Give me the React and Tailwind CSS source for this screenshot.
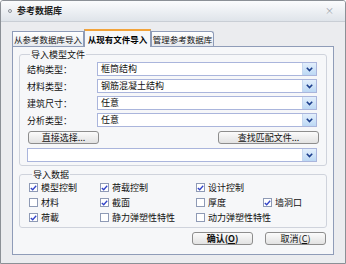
import React from 'react';

const FONT = { fontFamily: '"Noto Sans CJK SC", "Noto Sans", sans-serif' };

function Chevron() {
  return (
    <svg width="7" height="5" viewBox="0 0 7 5">
      <path d="M0.8 0.8 L3.5 3.6 L6.2 0.8" fill="none" stroke="#1d3f8c" strokeWidth="1.6" />
    </svg>
  );
}

function Combo({ value, className = '' }) {
  return (
    <div className={`flex h-[14px] items-stretch border border-[#aab5dc] bg-white ${className}`}>
      <div className="flex-1 pl-[3px] text-[9px] leading-[12px] text-[#111]">{value}</div>
      <div className="flex w-[14px] items-center justify-center border-l border-[#c6d7ef] bg-gradient-to-b from-[#e3effc] to-[#bcd8f4]">
        <Chevron />
      </div>
    </div>
  );
}

function Btn({ children, className = '', bold }) {
  return (
    <button className={`flex h-[13px] items-center justify-center whitespace-nowrap rounded-[3px] border border-[#8d8d8d] bg-gradient-to-b from-[#fbfbfb] to-[#e2e2e2] text-[9px] leading-none text-[#111] ${bold ? 'font-bold' : ''} ${className}`}>
      {children}
    </button>
  );
}

function Check({ on, label }) {
  return (
    <div className="flex items-center gap-[3px] whitespace-nowrap">
      <div className="flex h-[9px] w-[9px] items-center justify-center border border-[#8e9ab5] bg-white">
        {on && (
          <svg width="7" height="6" viewBox="0 0 7 6">
            <path d="M0.8 3 L2.7 4.8 L6.2 0.8" fill="none" stroke="#3344c8" strokeWidth="1.3" />
          </svg>
        )}
      </div>
      <span className="text-[9px] leading-none text-[#111]">{label}</span>
    </div>
  );
}

const rows = [
  ['结构类型：', '框筒结构'],
  ['材料类型：', '钢筋混凝土结构'],
  ['建筑尺寸：', '任意'],
  ['分析类型：', '任意'],
];

export default function App() {
  return (
    <div style={FONT} className="flex h-[264px] w-[346px] flex-col overflow-hidden rounded-t-[3px] border border-[#8b9096] bg-[#ebecef]">
      {/* title bar */}
      <div className="flex h-[21px] items-center border-b border-[#c9ced5] bg-gradient-to-b from-[#fbfcfd] to-[#dfe4ea] px-[7px]">
        <div className="mr-[5px] h-[4px] w-[4px] rounded-full border border-[#8a8f96]" />
        <span className="text-[9px] font-bold text-[#222]">参考数据库</span>
        <span className="ml-auto mr-[4px] text-[9px] text-[#9aa0a8]">×</span>
      </div>

      <div className="flex flex-1 flex-col px-[11px] pb-[8px] pt-[7px]">
        {/* tabs */}
        <div className="flex h-[17px] items-end">
          <div className="flex h-[15px] w-[72px] items-center justify-center whitespace-nowrap border border-b-0 border-[#8f9cb8] bg-gradient-to-b from-[#ffffff] to-[#e6e9ee] text-[8.5px] leading-none text-[#111]">
            从参考数据库导入
          </div>
          <div className="relative z-10 -mb-px flex h-[18px] w-[67px] items-center justify-center whitespace-nowrap border-x border-t-2 border-x-[#8f9cb8] border-t-[#f2a33a] bg-[#f6f7f9] text-[8.5px] font-bold leading-none text-[#000]">
            从现有文件导入
          </div>
          <div className="flex h-[15px] w-[63px] items-center justify-center whitespace-nowrap rounded-tr-[3px] border border-b-0 border-[#8f9cb8] bg-gradient-to-b from-[#ffffff] to-[#e6e9ee] text-[8.5px] leading-none text-[#111]">
            管理参考数据库
          </div>
        </div>

        {/* panel */}
        <div className="flex flex-1 flex-col border border-[#8f9cb8] bg-[#f6f7f9] px-[6px] pt-[2px]">
          <fieldset className="rounded-[3px] border border-[#cfd3dc] px-[7px] pb-[3px]">
            <legend className="ml-[3px] px-[1px] text-[9px] leading-[11px] text-[#111]">导入模型文件</legend>
            <div className="mt-[2px] flex flex-col gap-[3px]">
              {rows.map(([l, v]) => (
                <div key={l} className="flex items-center">
                  <span className="w-[70px] text-[9px] leading-none text-[#111]">{l}</span>
                  <Combo value={v} className="w-[220px]" />
                </div>
              ))}
            </div>
            <div className="mt-[4px] flex justify-between">
              <Btn className="ml-px w-[71px]">直接选择...</Btn>
              <Btn className="w-[101px]">查找匹配文件...</Btn>
            </div>
            <Combo value="" className="mt-[4px] w-[290px]" />
          </fieldset>

          <fieldset className="mt-[3px] rounded-[3px] border border-[#cfd3dc] px-[9px] pb-[5px]">
            <legend className="ml-[3px] px-[1px] text-[9px] leading-[11px] text-[#111]">导入数据</legend>
            <div className="mt-[3px] grid grid-cols-[71px_96px_67px_1fr] gap-y-[6px]">
              <Check on label="模型控制" />
              <Check on label="荷载控制" />
              <Check on label="设计控制" />
              <div />
              <Check label="材料" />
              <Check on label="截面" />
              <Check label="厚度" />
              <Check on label="墙洞口" />
              <Check on label="荷載" />
              <Check label="静力弹塑性特性" />
              <div className="col-span-2">
                <Check label="动力弹塑性特性" />
              </div>
            </div>
          </fieldset>

          <div className="mt-[4px] flex justify-end gap-[12px] pr-[1px]">
            <Btn bold className="w-[61px]">确认(<u>O</u>)</Btn>
            <Btn className="w-[61px]">取消(<u>C</u>)</Btn>
          </div>
        </div>
      </div>
    </div>
  );
}
